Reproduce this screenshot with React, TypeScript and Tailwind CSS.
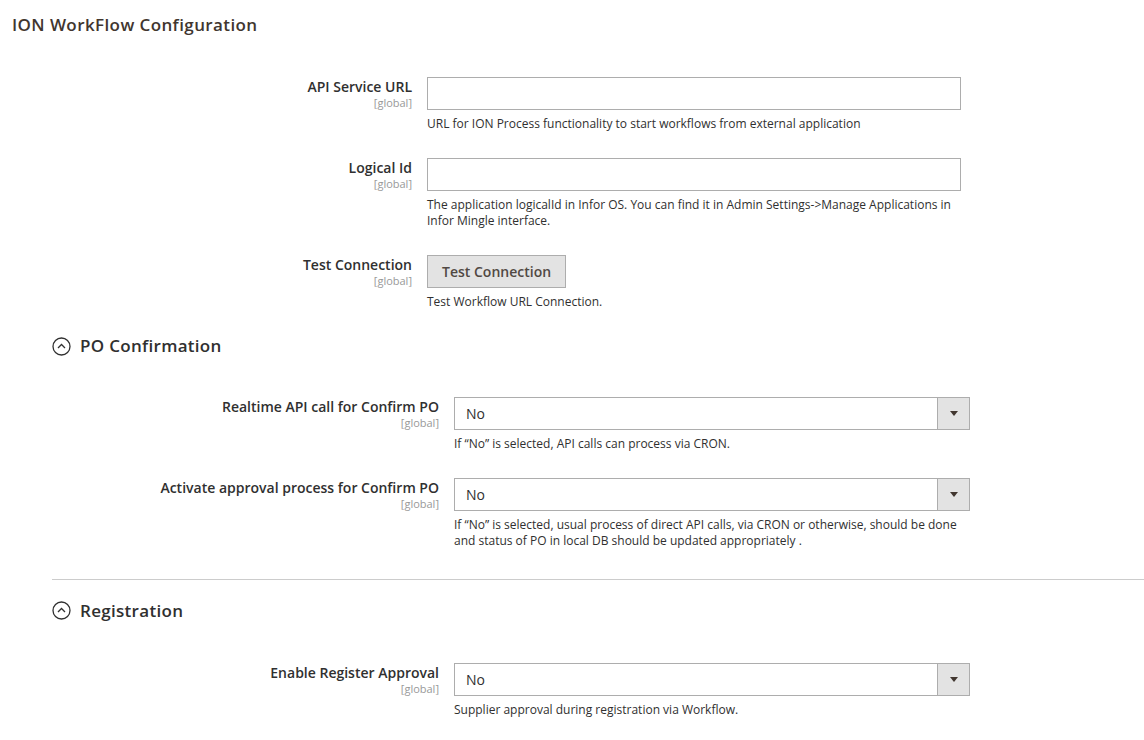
import { ReactNode } from "react";

function Scope() {
  return <span className="block text-[11px] leading-[12px] text-[#999999]">[global]</span>;
}

function Row({
  label,
  labelW,
  fieldW,
  children,
  note,
}: {
  label: string;
  labelW: string;
  fieldW: string;
  children: ReactNode;
  note: ReactNode;
}) {
  return (
    <div className="flex gap-[15px]">
      <div className={`${labelW} shrink-0 text-right`}>
        <span className="block text-[14px] font-semibold leading-[20px] text-[#303030]">{label}</span>
        <Scope />
      </div>
      <div className={fieldW}>
        {children}
        <p className="mt-[6px] text-[12px] leading-[16.5px] text-[#303030]">{note}</p>
      </div>
    </div>
  );
}

function TextBox() {
  return <div className="h-[33px] w-full border border-[#adadad] bg-white" />;
}

function Select() {
  return (
    <div className="flex h-[33px] w-full border border-[#adadad] bg-white">
      <div className="flex flex-1 items-center pl-[11px] text-[14px] text-[#303030]">No</div>
      <div className="flex w-[32px] items-center justify-center border-l border-[#adadad] bg-[#e3e3e3]">
        <svg width="8" height="5" viewBox="0 0 8 5">
          <path d="M0 0h8L4 5z" fill="#41362f" />
        </svg>
      </div>
    </div>
  );
}

function SectionHead({ title }: { title: string }) {
  return (
    <div className="flex h-[24px] items-center gap-[9px]">
      <svg width="19" height="19" viewBox="0 0 19 19" fill="none">
        <circle cx="9.5" cy="9.5" r="8.5" stroke="#303030" strokeWidth="1.3" />
        <path d="M6 11l3.5-3.5L13 11" stroke="#303030" strokeWidth="1.3" />
      </svg>
      <h2 className="text-[17px] font-semibold leading-[24px] tracking-[0.3px] text-[#303030]">{title}</h2>
    </div>
  );
}

export default function App() {
  return (
    <div className="h-[740px] w-[1144px] overflow-hidden bg-white font-['Open_Sans',sans-serif]">
      <h1 className="pl-[12px] pt-[13px] text-[17px] font-semibold leading-[24px] tracking-[0.4px] text-[#41362f]">
        ION WorkFlow Configuration
      </h1>

      <div className="mt-[40px] flex flex-col gap-[25px]">
        <Row
          label="API Service URL"
          labelW="w-[412px]"
          fieldW="w-[534px]"
          note="URL for ION Process functionality to start workflows from external application"
        >
          <TextBox />
        </Row>
        <Row
          label="Logical Id"
          labelW="w-[412px]"
          fieldW="w-[534px]"
          note="The application logicalId in Infor OS. You can find it in Admin Settings->Manage Applications in Infor Mingle interface."
        >
          <TextBox />
        </Row>
        <Row label="Test Connection" labelW="w-[412px]" fieldW="w-[534px]" note="Test Workflow URL Connection.">
          <button className="h-[33px] border border-[#adadad] bg-[#e3e3e3] px-[14px] text-[14px] font-semibold text-[#514943]">
            Test Connection
          </button>
        </Row>
      </div>

      <div className="ml-[52px] mt-[24px]">
        <SectionHead title="PO Confirmation" />
        <div className="mt-[39px] flex flex-col gap-[25px]">
          <Row
            label="Realtime API call for Confirm PO"
            labelW="w-[387px]"
            fieldW="w-[516px]"
            note="If “No” is selected, API calls can process via CRON."
          >
            <Select />
          </Row>
          <Row
            label="Activate approval process for Confirm PO"
            labelW="w-[387px]"
            fieldW="w-[516px]"
            note="If “No” is selected, usual process of direct API calls, via CRON or otherwise, should be done and status of PO in local DB should be updated appropriately ."
          >
            <Select />
          </Row>
        </div>

        <div className="mt-[29px] border-t border-[#cccccc]" />

        <div className="mt-[19px]">
          <SectionHead title="Registration" />
        </div>
        <div className="mt-[40px]">
          <Row
            label="Enable Register Approval"
            labelW="w-[387px]"
            fieldW="w-[516px]"
            note="Supplier approval during registration via Workflow."
          >
            <Select />
          </Row>
        </div>
      </div>
    </div>
  );
}
